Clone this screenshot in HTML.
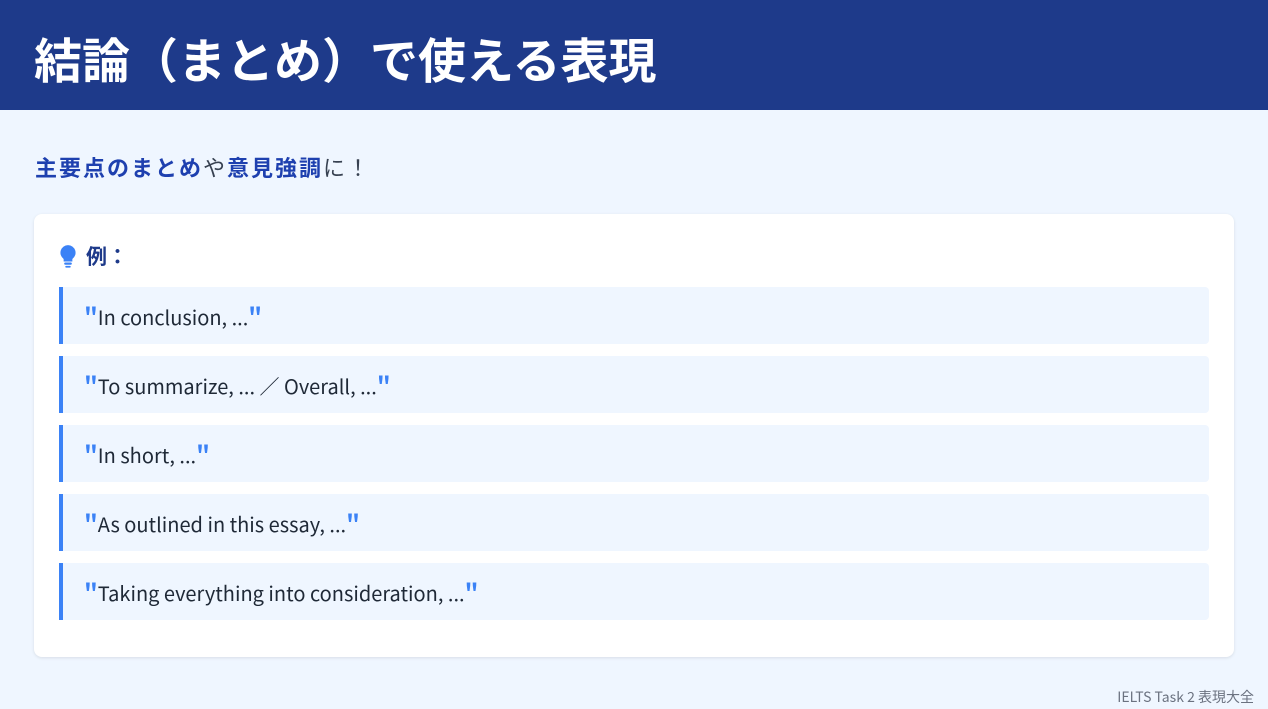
<!DOCTYPE html>
<html><head><meta charset="utf-8"><style>
*{margin:0;padding:0;box-sizing:border-box}
body{width:1268px;height:709px;background:#eff6ff;font-family:"Liberation Sans","Noto Sans CJK JP",sans-serif;position:relative;overflow:hidden}
.hd{height:110px;background:#1e3a8a;color:#fff;font-size:48px;font-weight:bold;padding-left:34px;line-height:114px;font-family:"Noto Sans CJK JP",sans-serif}
.sub{position:absolute;left:35px;top:151px;font-size:22px;letter-spacing:2px;font-weight:bold;color:#1e40af;font-family:"Noto Sans CJK JP",sans-serif}
.sub span{font-weight:normal;color:#374151}
.card{position:absolute;left:34px;top:214px;width:1200px;height:443px;background:#fff;border-radius:8px;box-shadow:0 1px 3px rgba(0,0,0,.1)}
.ex{position:absolute;left:25px;top:27px;font-size:21px;font-weight:bold;color:#1e3a8a;display:flex;align-items:center;gap:9px;font-family:"Noto Sans CJK JP",sans-serif}
.it{position:absolute;left:25px;width:1150px;height:57px;background:#eff6ff;border-left:4px solid #3b82f6;border-radius:0 4px 4px 0;font-size:20px;color:#1f2937;padding-left:21px;line-height:56px;font-family:"Noto Sans CJK JP","Liberation Sans",sans-serif}
.q{color:#3b82f6;font-size:24px;font-weight:bold}
.ft{position:absolute;right:14px;bottom:2px;font-size:14px;color:#6b7280;font-family:"Noto Sans CJK JP",sans-serif}
</style></head><body>
<div class="hd">結論（まとめ）で使える表現</div>
<div class="sub">主要点のまとめ<span>や</span>意見強調<span>に！</span></div>
<div class="card">
<div class="ex"><svg width="18" height="24" viewBox="0 0 16 22"><path d="M8 1a7 7 0 0 0-4 12.7V16h8v-2.3A7 7 0 0 0 8 1z" fill="#3b82f6"/><rect x="4.5" y="17" width="7" height="2" rx="1" fill="#3b82f6"/><rect x="5.5" y="20" width="5" height="1.6" rx=".8" fill="#3b82f6"/></svg>例：</div>
<div class="it" style="top:73px"><span class="q">"</span>In conclusion, ...<span class="q">"</span></div>
<div class="it" style="top:142px"><span class="q">"</span>To summarize, ... ／ Overall, ...<span class="q">"</span></div>
<div class="it" style="top:211px"><span class="q">"</span>In short, ...<span class="q">"</span></div>
<div class="it" style="top:280px"><span class="q">"</span>As outlined in this essay, ...<span class="q">"</span></div>
<div class="it" style="top:349px"><span class="q">"</span>Taking everything into consideration, ...<span class="q">"</span></div>
</div>
<div class="ft">IELTS Task 2 表現大全</div>
</body></html>
